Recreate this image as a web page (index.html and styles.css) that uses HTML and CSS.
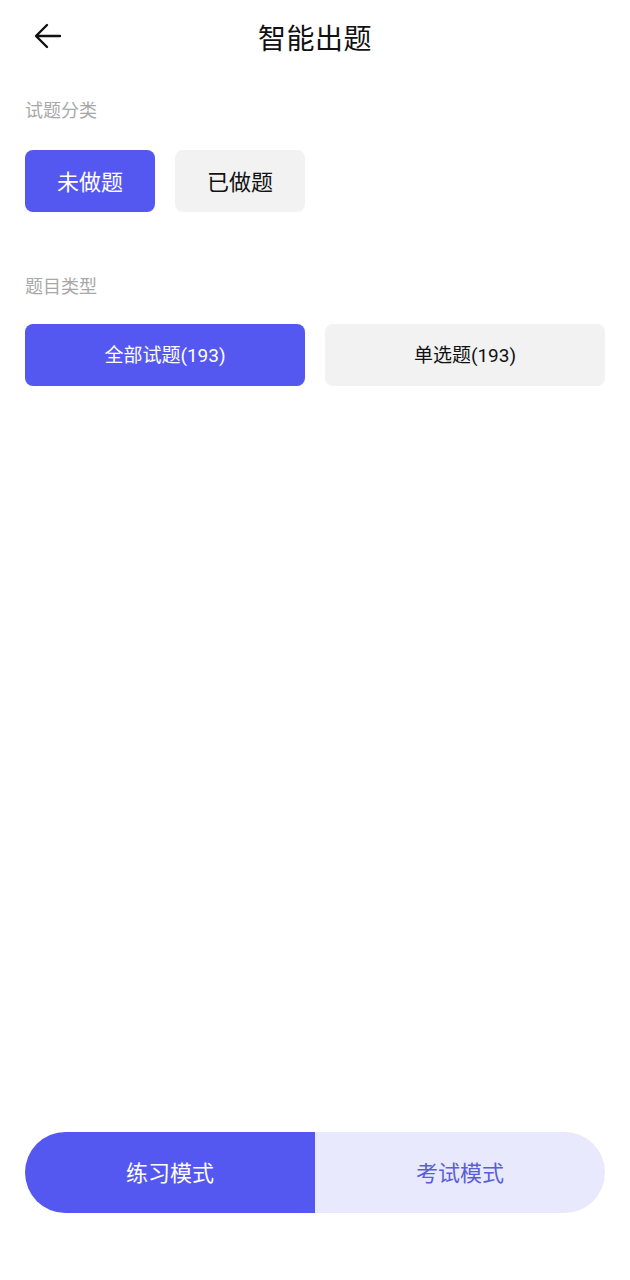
FILE: index.html
```html
<!DOCTYPE html>
<html lang="zh">
<head>
<meta charset="utf-8">
<link rel="stylesheet" href="styles.css">
</head>
<body>
<div class="page">
  <header class="nav">
    <span class="back">
      <svg width="28" height="26" viewBox="0 0 28 26"><path d="M26 13H3M13 2L2 13l11 11" fill="none" stroke="#111" stroke-width="2.4" stroke-linecap="round" stroke-linejoin="round"/></svg>
    </span>
    <h1 class="title">智能出题</h1>
  </header>
  <main class="content">
    <div class="label">试题分类</div>
    <div class="row">
      <button class="chip chip-sm active">未做题</button>
      <button class="chip chip-sm">已做题</button>
    </div>
    <div class="label label2">题目类型</div>
    <div class="row row2">
      <button class="chip chip-lg active">全部试题(193)</button>
      <button class="chip chip-lg">单选题(193)</button>
    </div>
  </main>
  <footer class="modes">
    <div class="mode mode-on">练习模式</div>
    <div class="mode mode-off">考试模式</div>
  </footer>
</div>
</body>
</html>
```
FILE: styles.css
```css
* { box-sizing: border-box; }
html, body { margin: 0; padding: 0; background: #fff; }
body { font-family: Roboto, "Noto Sans CJK SC", sans-serif; color: #111; }
.page { width: 630px; height: 1280px; display: flex; flex-direction: column; }
.nav { position: relative; height: 74px; display: flex; align-items: center; justify-content: center; }
.back { position: absolute; left: 34px; top: 23px; display: flex; }
.title { margin: 0; font-size: 28px; font-weight: 400; color: #111; letter-spacing: 0.5px; }
.content { flex: 1; padding: 24px 25px 0; }
.label { font-size: 18px; color: #a8a8a8; line-height: 26px; }
.label2 { margin-top: 62px; }
.row { display: flex; gap: 20px; margin-top: 26px; }
.row2 { margin-top: 24px; }
.chip { border: none; font-family: inherit; height: 62px; border-radius: 8px; background: #f2f2f2; color: #111; padding: 0 0 3px; }
.chip-sm { width: 130px; font-size: 22px; }
.chip-lg { width: 280px; font-size: 19px; }
.chip.active { background: #5558f0; color: #fff; }
.modes { display: flex; margin: 0 25px 67px; height: 81px; border-radius: 41px; overflow: hidden; }
.mode { flex: 1; display: flex; align-items: center; justify-content: center; font-size: 22px; padding-bottom: 3px; }
.mode-on { background: #5558f0; color: #fff; }
.mode-off { background: #e8e9fd; color: #5a5dd6; }
```
